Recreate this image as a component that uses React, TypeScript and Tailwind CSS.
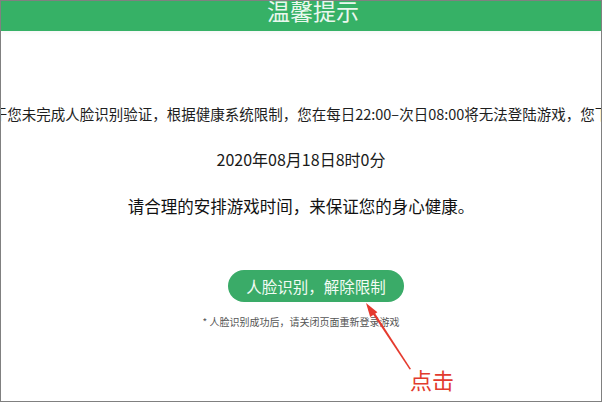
import React from "react";

export default function App() {
  return (
    <div className="relative w-[602px] h-[402px] overflow-hidden border border-[#808080] bg-white flex flex-col items-center font-['Noto_Sans_CJK_SC','Noto_Sans',sans-serif]">
      <div className="w-full h-[30px] shrink-0 bg-[#36b166] flex justify-center overflow-hidden shadow-[0_2px_4px_rgba(0,0,0,0.04)]">
        <div className="ml-[24px] -mt-[2px] text-[23px] leading-[23px] text-[#eaf7ee]">温馨提示</div>
      </div>
      <div className="mt-[73px] w-full flex justify-center">
        <div className="shrink-0 whitespace-nowrap text-[14.5px] leading-[20px] text-[#1e1e1e]">
          于您未完成人脸识别验证，根据健康系统限制，您在每日22:00–次日08:00将无法登陆游戏，您下
        </div>
      </div>
      <div className="mt-[24px] text-[16px] leading-[22px] text-[#1a1a1a]">2020年08月18日8时0分</div>
      <div className="mt-[24px] text-[16.5px] leading-[24px] text-[#111]">请合理的安排游戏时间，来保证您的身心健康。</div>
      <button className="mt-[52px] ml-[30px] w-[176px] h-[32px] rounded-full bg-[#3aab68] text-[15.5px] leading-[32px] text-[#f2fbf4]">
        人脸识别，解除限制
      </button>
      <div className="mt-[13px] text-[10px] leading-[14px] text-[#555]">* 人脸识别成功后，请关闭页面重新登录游戏</div>

      <svg className="absolute left-0 top-0" width="602" height="402" viewBox="0 0 602 402">
        <polygon points="365,302 376.4,311.2 369.2,316" fill="#e53a2e" />
        <polygon points="371.4,312.6 374.2,312.6 410,368 408.6,368.4" fill="#e53a2e" />
      </svg>
      <div className="absolute left-[409px] top-[363px] text-[22px] leading-[30px] text-[#e23b2e]">点击</div>
    </div>
  );
}
